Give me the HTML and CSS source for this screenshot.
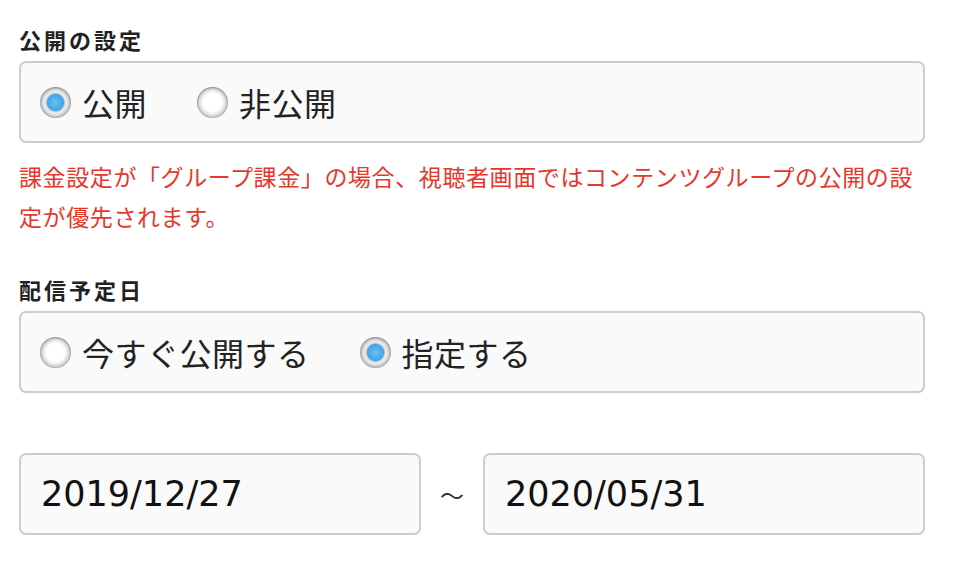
FILE: index.html
```html
<!DOCTYPE html>
<html lang="ja">
<head>
  <meta charset="UTF-8" />
  <title>配信設定</title>
  <link rel="stylesheet" href="styles.css">
</head>
<body>

  <div class="form">
    <section class="field">
      <h2 class="field-title">公開の設定</h2>
      <div class="choice-box">
        <label class="choice"><input type="radio" name="koukai" checked><span>公開</span></label>
        <label class="choice"><input type="radio" name="koukai"><span>非公開</span></label>
      </div>
      <p class="note">課金設定が「グループ課金」の場合、視聴者画面ではコンテンツグループの公開の設定が優先されます。</p>
    </section>

    <section class="field second">
      <h2 class="field-title">配信予定日</h2>
      <div class="choice-box">
        <label class="choice"><input type="radio" name="haishin"><span>今すぐ公開する</span></label>
        <label class="choice"><input type="radio" name="haishin" checked><span>指定する</span></label>
      </div>
    </section>

    <div class="period">
      <input class="date-input" type="text" value="2019/12/27">
      <span class="tilde">～</span>
      <input class="date-input" type="text" value="2020/05/31">
    </div>
  </div>

</body>
</html>
```

FILE: styles.css
```css
body {
  margin: 0;
  padding: 0 31px 0 19px;
  background-color: #fff;
  color: #222;
  font-family: "Noto Sans CJK JP", "Noto Sans", sans-serif;
}
.field-title {
  margin: 24px 0 7px;
  font-size: 22px;
  line-height: 30px;
  font-weight: bold;
  letter-spacing: 3px;
}
.second .field-title {
  margin-top: 38px;
}
.choice-box {
  box-sizing: border-box;
  height: 82px;
  display: flex;
  align-items: center;
  padding-left: 19px;
  background-color: #fafafa;
  border: 2px solid #cdcdcd;
  border-radius: 7px;
}
.choice {
  display: flex;
  align-items: center;
  margin-right: 50px;
  font-size: 32px;
  line-height: 40px;
  letter-spacing: 0.5px;
  color: #222;
}
.choice input {
  appearance: none;
  -webkit-appearance: none;
  width: 31px;
  height: 31px;
  margin: 0 11px 0 0;
  border-radius: 50%;
  background: radial-gradient(circle, #fff 0, #fff 9px, #f1f1f1 11px, #cfcfcf 14px, #aaa 15.5px);
  box-shadow: inset 0 1px 2px rgba(0,0,0,0.2);
}
.choice input:checked {
  background: radial-gradient(circle, #6cc0f3 0, #41a4e9 8px, #dadada 9.5px, #efefef 11px, #c6c6c6 14px, #a8a8a8 15.5px);
}
.note {
  margin: 13px 0 0;
  font-size: 23px;
  line-height: 40px;
  letter-spacing: 0.6px;
  color: #e6372b;
}
.period {
  margin-top: 60px;
  display: grid;
  grid-template-columns: 402px 62px 1fr;
  align-items: center;
}
.date-input {
  box-sizing: border-box;
  width: 100%;
  height: 82px;
  padding: 0 20px;
  background-color: #fafafa;
  border: 2px solid #cdcdcd;
  border-radius: 7px;
  font-family: "DejaVu Sans", "Noto Sans CJK JP", sans-serif;
  font-size: 35px;
  color: #111;
  outline: none;
}
.tilde {
  text-align: center;
  font-size: 24px;
  color: #333;
}
```
